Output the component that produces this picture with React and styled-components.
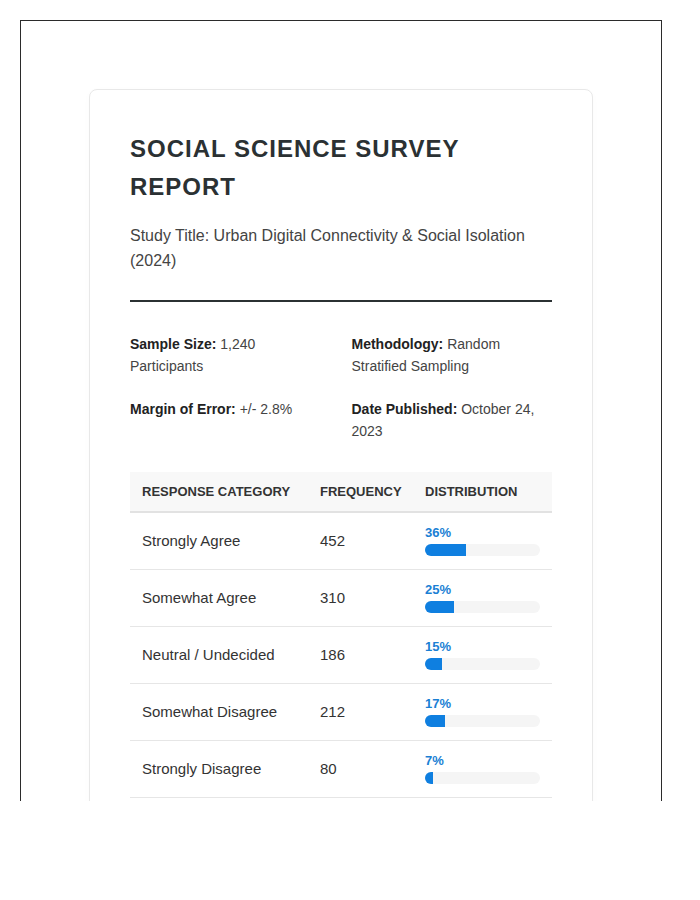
import styled, { createGlobalStyle } from 'styled-components';

const GlobalStyle = createGlobalStyle`
  html, body {
    margin: 0;
    padding: 0;
    background: #fff;
  }
  body {
    font-family: "Liberation Sans", Arial, sans-serif;
    color: #333;
  }
`

const stats = [
  { label: 'Sample Size:', value: '1,240 Participants' },
  { label: 'Methodology:', value: 'Random Stratified Sampling' },
  { label: 'Margin of Error:', value: '+/- 2.8%' },
  { label: 'Date Published:', value: 'October 24, 2023' },
]

const responses = [
  { category: 'Strongly Agree', frequency: 452, pct: 36 },
  { category: 'Somewhat Agree', frequency: 310, pct: 25 },
  { category: 'Neutral / Undecided', frequency: 186, pct: 15 },
  { category: 'Somewhat Disagree', frequency: 212, pct: 17 },
  { category: 'Strongly Disagree', frequency: 80, pct: 7 },
]

function App() {
  return (
    <>
      <GlobalStyle />
      <Frame>
        <Card>
          <Header>
            <Title>Social Science Survey Report</Title>
            <Subtitle>Study Title: Urban Digital Connectivity &amp; Social Isolation (2024)</Subtitle>
          </Header>

          <MetaGrid>
            {stats.map((s) => (
              <MetaItem key={s.label}>
                <strong>{s.label}</strong> {s.value}
              </MetaItem>
            ))}
          </MetaGrid>

          <Table>
            <thead>
              <tr>
                <Th $width="178px">Response Category</Th>
                <Th $width="105px">Frequency</Th>
                <Th>Distribution</Th>
              </tr>
            </thead>
            <tbody>
              {responses.map((r) => (
                <tr key={r.category}>
                  <Td>{r.category}</Td>
                  <Td>{r.frequency}</Td>
                  <Td>
                    <Percent>{r.pct}%</Percent>
                    <Track>
                      <Fill style={{ width: `${r.pct}%` }} />
                    </Track>
                  </Td>
                </tr>
              ))}
            </tbody>
          </Table>
        </Card>
      </Frame>
    </>
  );
}

const Frame = styled.div`
  box-sizing: border-box;
  width: 642px;
  height: 781px;
  margin: 20px 0 0 20px;
  padding: 68px 0 0 68px;
  border: 1px solid #2b2b2b;
  border-bottom: none;
  overflow: hidden;
`
const Card = styled.div`
  box-sizing: border-box;
  width: 504px;
  padding: 40px;
  background: #fff;
  border: 1px solid #e8e8e8;
  border-radius: 8px;
  box-shadow: 0 2px 8px rgba(0, 0, 0, 0.02);
`
const Header = styled.div`
  padding-bottom: 26px;
  border-bottom: 2px solid #2b3133;
`
const Title = styled.h1`
  margin: 0 0 16px;
  font-size: 24px;
  line-height: 1.6;
  font-weight: bold;
  letter-spacing: 1px;
  text-transform: uppercase;
  color: #2b3133;
`
const Subtitle = styled.p`
  margin: 0;
  font-size: 16px;
  line-height: 1.6;
  color: #444;
`
const MetaGrid = styled.div`
  display: grid;
  grid-template-columns: 1fr 1fr;
  column-gap: 21px;
  row-gap: 20px;
  margin-top: 31px;
`
const MetaItem = styled.div`
  font-size: 14px;
  line-height: 1.6;
  color: #444;
  strong {
    color: #222;
  }
`
const Table = styled.table`
  width: 100%;
  margin-top: 29px;
  border-collapse: collapse;
  table-layout: fixed;
  text-align: left;
`
const Th = styled.th`
  box-sizing: border-box;
  width: ${(p) => p.$width || 'auto'};
  padding: 12px 12px 11px;
  background: #f8f8f8;
  border-bottom: 2px solid #e2e2e2;
  font-size: 13px;
  line-height: 16px;
  font-weight: bold;
  text-transform: uppercase;
  white-space: nowrap;
  color: #333;
`
const Td = styled.td`
  padding: 13px 12px;
  border-bottom: 1px solid #e6e6e6;
  font-size: 15px;
  color: #333;
  vertical-align: middle;
`
const Percent = styled.div`
  font-size: 13px;
  line-height: 14px;
  font-weight: bold;
  color: #1a7fd4;
  margin-bottom: 4px;
`
const Track = styled.div`
  width: 115px;
  height: 12px;
  border-radius: 6px;
  background: #f5f5f5;
  overflow: hidden;
`
const Fill = styled.div`
  height: 100%;
  background: #0f7fe0;
`

export default App;
